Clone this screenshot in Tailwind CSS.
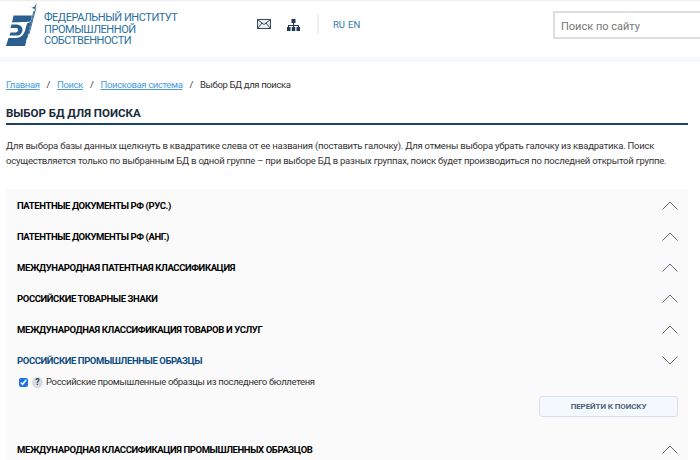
<!DOCTYPE html>
<html lang="ru">
<head>
    <meta charset="UTF-8">
    <title>Выбор БД для поиска</title>
    <script src="https://cdn.jsdelivr.net/npm/@tailwindcss/browser@4"></script>
</head>
<body class="bg-white font-['Roboto',sans-serif] overflow-hidden h-[460px]">
    <header class="h-[62px] border-t border-t-[#eeeeee] border-b-[5px] border-b-[#f5f8fb] flex">
        <a class="w-[250px] flex pl-[6px] pt-[1px] gap-[6px]">
            <svg class="w-[32px] h-[44px]" viewBox="0 0 32 44">
                <path fill="#2a5f8f" d="M7.500 13.500 H26 L24.500 19.500 C22 20 16 20 6 20.500 Z"/>
                <path fill="#2a5f8f" d="M0 44 L2.500 36 H10 C15 36 18.500 32 19.500 27 L21 21.500 L25.500 19.500 L19 44 Z"/>
                <path fill="#2a5f8f" d="M5.500 22.500 H11 A5.500 5.500 0 1 1 11 33.500 H3.500 L4.500 30.500 H10 A2.500 2.500 0 0 0 11 26 H4.500 Z"/>
                <path fill="none" stroke="#ffffff" stroke-width="0.800" d="M20.500 40 L25 21"/>
                <path fill="none" stroke="#2a5f8f" stroke-width="0.900" d="M21 36 L28 9 M23 32 L29.500 7"/>
                <path fill="#2a5f8f" d="M31 1 L29.800 4.500 L29.500 8 L28 6.500 L25 6 L28.300 4.800 Z"/>
            </svg>
            <div class="text-[11px] tracking-[-0.45px] leading-[11.500px] text-[#2a6f9e] uppercase pt-[10px]">
                <div>Федеральный институт</div>
                <div>Промышленной</div>
                <div>Собственности</div>
            </div>
        </a>
        <div class="flex items-start pt-[13px]">
            <svg class="w-[14px] h-[10px] mt-[5px] ml-[7px]" viewBox="0 0 14 10" fill="none" stroke="#33475b" stroke-width="1"><rect x="0.500" y="0.500" width="13" height="9" fill="#eef2f5"/><path d="M0.500 0.500 L7 5.500 L13.500 0.500 M0.500 9.500 L5 4 M13.500 9.500 L9 4"/></svg>
            <svg class="w-[13px] h-[12px] mt-[5px] ml-[16px]" viewBox="0 0 13 12" fill="#1f3b57"><rect x="4.500" y="0" width="4" height="4"/><rect x="0" y="8" width="3.500" height="4"/><rect x="4.750" y="8" width="3.500" height="4"/><rect x="9.500" y="8" width="3.500" height="4"/><path d="M6 4h1v2h5v2h-1V7H7v1H6V7H2v1H1V6h5z"/></svg>
            <div class="w-[2px] h-[20px] bg-[#eef1f4] ml-[17px]"></div>
            <div class="text-[9.500px] text-[#2a7ab0] ml-[14px] mt-[4px] flex gap-[3px]"><span>RU</span><span>EN</span></div>
        </div>
        <div class="ml-auto mt-[10px] w-[147px] h-[28px] border-2 border-r-0 border-[#dedede] pl-[6px] text-[11px] leading-[28px] text-[#777777]">Поиск по сайту</div>
    </header>

    <main class="px-[6px]">
        <nav class="flex items-center text-[9.500px] tracking-[-0.37px] h-[16px] mt-[15px] text-[#333333]">
            <a class="text-[#4a9bd8] underline">Главная</a><span class="mx-[7px]">/</span>
            <a class="text-[#4a9bd8] underline">Поиск</a><span class="mx-[7px]">/</span>
            <a class="text-[#4a9bd8] underline">Поисковая система</a><span class="mx-[7px]">/</span>
            <span>Выбор БД для поиска</span>
        </nav>
        <h1 class="mt-[12px] h-[20px] w-[682px] border-b-2 border-[#1d4468] text-[11.500px] leading-[16px] font-bold text-[#1a2a3a] uppercase">Выбор БД для поиска</h1>
        <p class="mt-[13px] w-[680px] text-[9.500px] tracking-[-0.22px] leading-[15px] text-[#333333]">Для выбора базы данных щелкнуть в квадратике слева от ее названия (поставить галочку). Для отмены выбора убрать галочку из квадратика. Поиск осуществляется только по выбранным БД в одной группе – при выборе БД в разных группах, поиск будет производиться по последней открытой группе.</p>

        <section class="mt-[21px] w-[682px] bg-[#fafafa] pl-[11px] pr-[10px]">
            <div class="h-[31px] flex items-center justify-between text-[9.500px] tracking-[-0.39px] font-bold text-black uppercase">
                <span class="mt-[4px]">Патентные документы РФ (рус.)</span>
                <svg class="w-[16px] h-[9px] mt-[2px]" viewBox="0 0 16 9" fill="none" stroke="#5b6b7f"><path d="M0.500 8.500 L8 1 L15.500 8.500"/></svg>
            </div>
            <div class="h-[31px] flex items-center justify-between text-[9.500px] tracking-[-0.39px] font-bold text-black uppercase">
                <span class="mt-[4px]">Патентные документы РФ (анг.)</span>
                <svg class="w-[16px] h-[9px] mt-[2px]" viewBox="0 0 16 9" fill="none" stroke="#5b6b7f"><path d="M0.500 8.500 L8 1 L15.500 8.500"/></svg>
            </div>
            <div class="h-[31px] flex items-center justify-between text-[9.500px] tracking-[-0.39px] font-bold text-black uppercase">
                <span class="mt-[4px]">Международная патентная классификация</span>
                <svg class="w-[16px] h-[9px] mt-[2px]" viewBox="0 0 16 9" fill="none" stroke="#5b6b7f"><path d="M0.500 8.500 L8 1 L15.500 8.500"/></svg>
            </div>
            <div class="h-[31px] flex items-center justify-between text-[9.500px] tracking-[-0.39px] font-bold text-black uppercase">
                <span class="mt-[4px]">Российские товарные знаки</span>
                <svg class="w-[16px] h-[9px] mt-[2px]" viewBox="0 0 16 9" fill="none" stroke="#5b6b7f"><path d="M0.500 8.500 L8 1 L15.500 8.500"/></svg>
            </div>
            <div class="h-[31px] flex items-center justify-between text-[9.500px] tracking-[-0.39px] font-bold text-black uppercase">
                <span class="mt-[4px]">Международная классификация товаров и услуг</span>
                <svg class="w-[16px] h-[9px] mt-[2px]" viewBox="0 0 16 9" fill="none" stroke="#5b6b7f"><path d="M0.500 8.500 L8 1 L15.500 8.500"/></svg>
            </div>
            <div class="h-[31px] flex items-center justify-between text-[9.500px] tracking-[-0.39px] font-bold text-[#0f4c81] uppercase">
                <span class="mt-[4px]">Российские промышленные образцы</span>
                <svg class="w-[16px] h-[9px] mt-[2px]" viewBox="0 0 16 9" fill="none" stroke="#5b6b7f"><path d="M0.500 0.500 L8 8 L15.500 0.500"/></svg>
            </div>
            <label class="flex items-center h-[14px] ml-[2px] text-[9.500px] tracking-[-0.33px] text-[#333333]">
                <input type="checkbox" checked class="w-[9px] h-[9px] accent-[#1a73e8]">
                <span class="w-[11px] h-[11px] rounded-full bg-[#d5dce3] text-[#33475b] text-[9px] tracking-normal font-bold leading-[11px] text-center ml-[4px] mr-[3px]">?</span>
                Российские промышленные образцы из последнего бюллетеня
            </label>
            <div class="flex justify-end mt-[7px]">
                <button class="w-[139px] h-[21px] rounded-[3px] border border-[#d9e0e8] bg-[#f3f9ff] text-[8px] tracking-[-0.1px] font-bold text-[#4f5f78] uppercase">Перейти к поиску</button>
            </div>
            <div class="mt-[16px] h-[31px] flex items-center justify-between text-[9.500px] tracking-[-0.39px] font-bold text-black uppercase">
                <span class="mt-[4px]">Международная классификация промышленных образцов</span>
                <svg class="w-[16px] h-[9px] mt-[2px]" viewBox="0 0 16 9" fill="none" stroke="#5b6b7f"><path d="M0.500 8.500 L8 1 L15.500 8.500"/></svg>
            </div>
        </section>
    </main>
</body>
</html>
